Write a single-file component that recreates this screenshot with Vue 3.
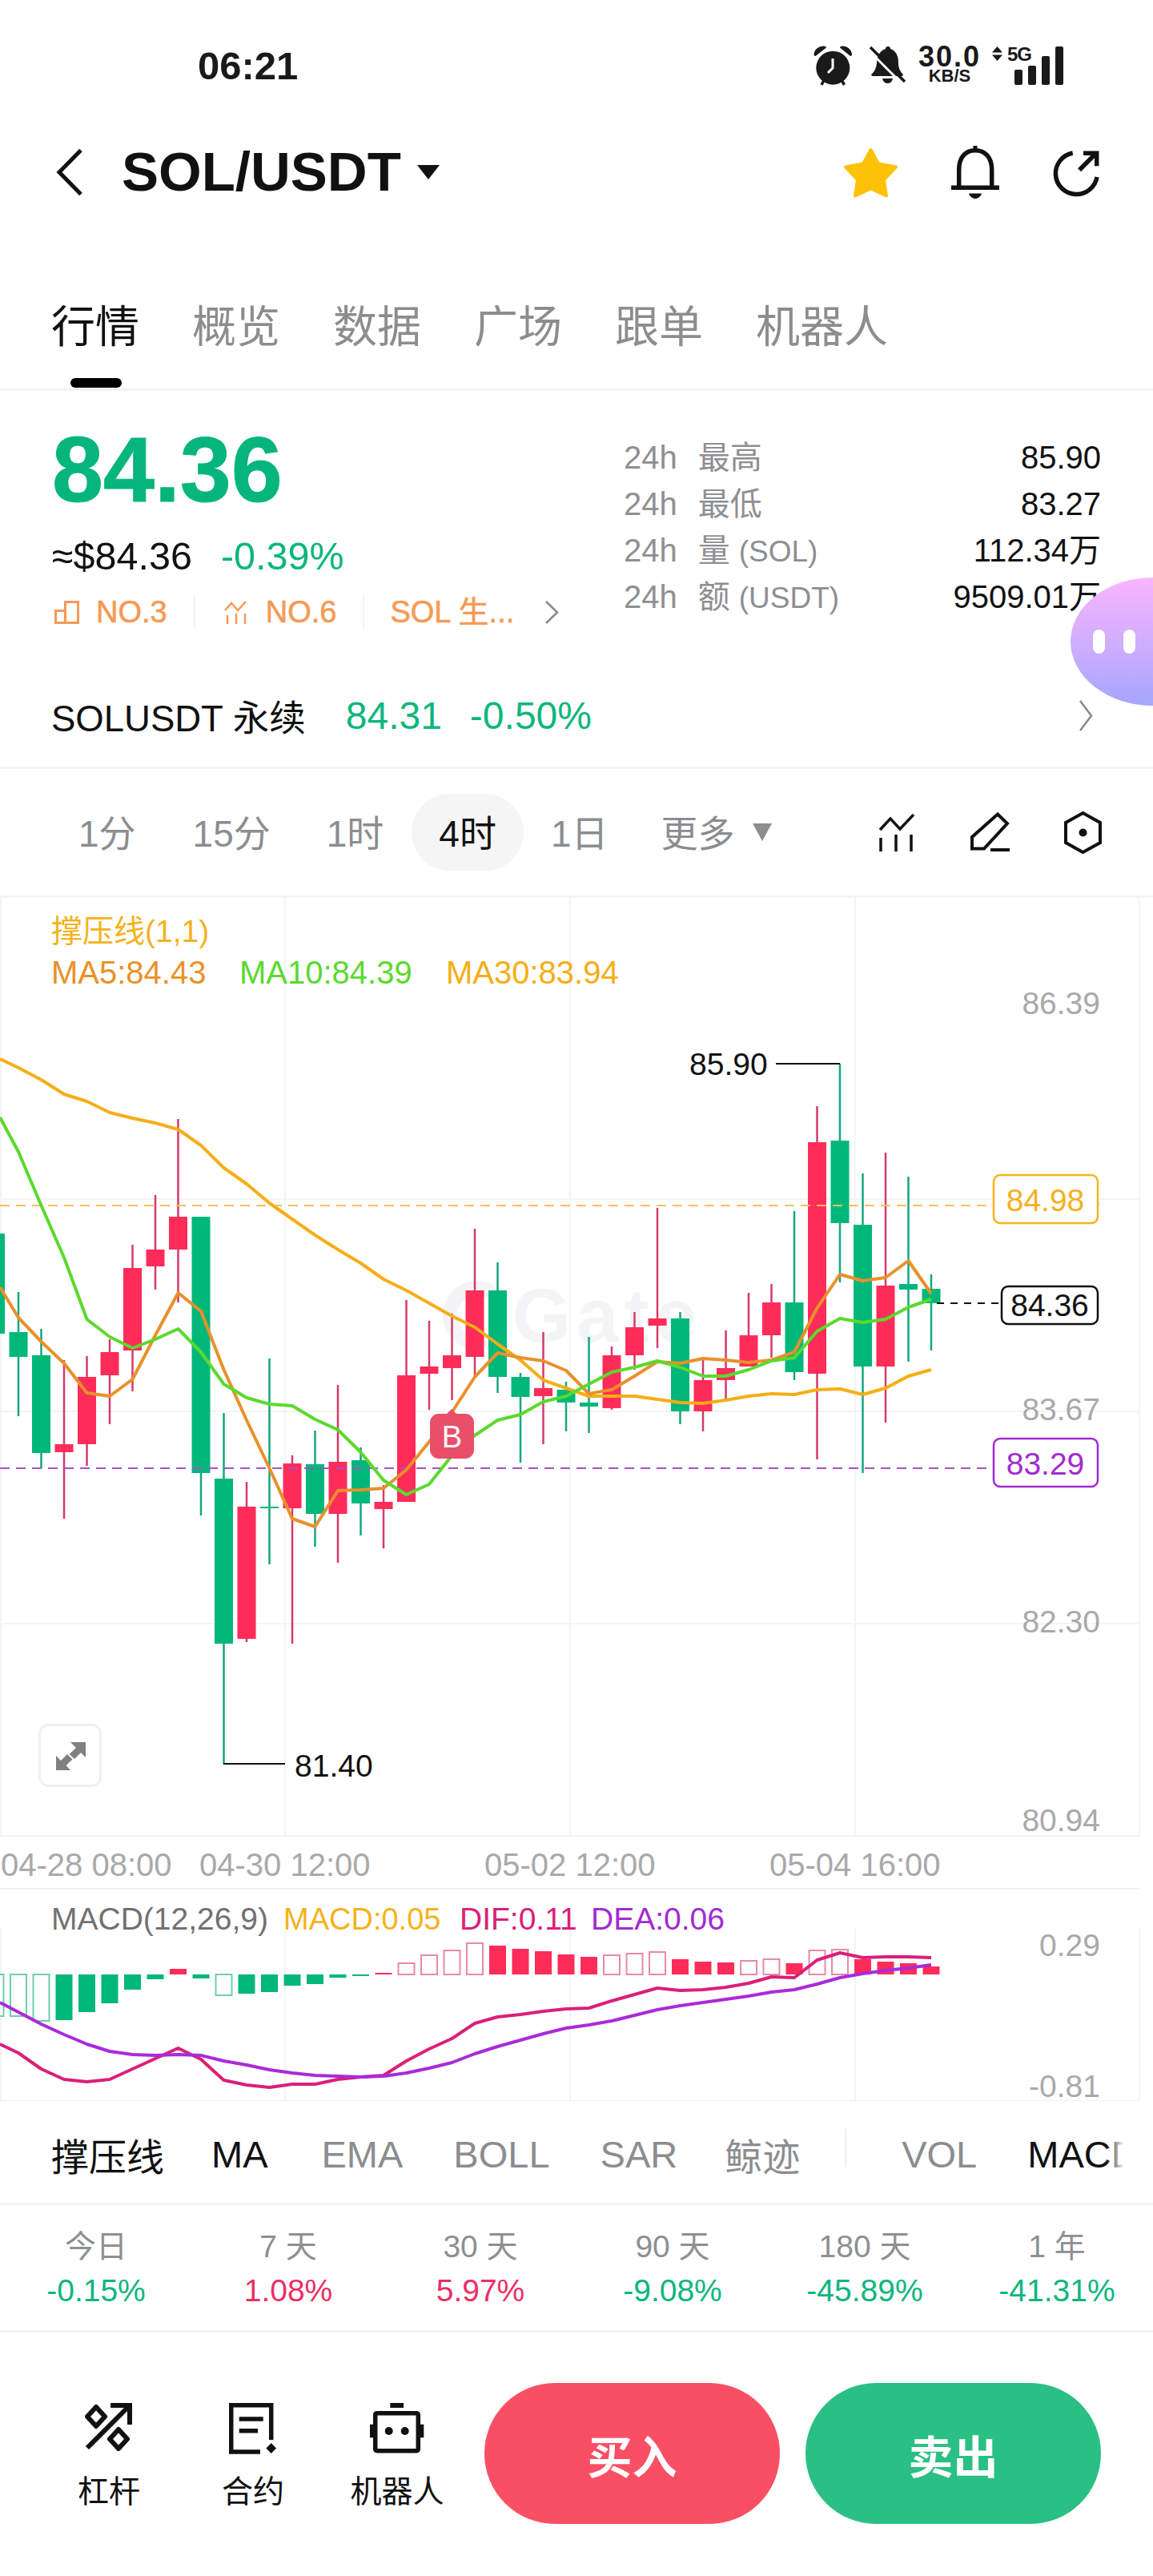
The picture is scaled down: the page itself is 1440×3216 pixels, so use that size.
<template>
  <div class="page">
    <div class="status">
      <span class="clock">06:21</span>
      <div class="status-right">
        <svg class="ic-alarm" width="49" height="50" viewBox="0 0 49 50">
          <circle cx="24.3" cy="27.7" r="21" fill="#1a1a1a" />
          <path d="M24 16v12l-6 6" fill="none" stroke="#fff" stroke-width="3" />
          <path d="M0.5 11C1 5 6 0.5 13 0.5c2 0 3 1 3 2L2.5 13c-1 0-2-1-2-2zM48 11C47.500 5 42.500 0.500 36 0.500c-2 0-3 1-3 2L46 13c1 0 2-1 2-2z" fill="#1a1a1a" />
          <path d="M13 43l-3 6M35 43l3.500 6" stroke="#1a1a1a" stroke-width="3.500" />
        </svg>
        <svg class="ic-mute" width="46" height="47" viewBox="0 0 46 47">
          <path d="M23 1a3 3 0 0 1 3 3c7 2 10 9 10 17 0 7 2 11 6 15l-1 2H3l-1-2c4-3 6-7 7-14 0-9 4-16 11-18a3 3 0 0 1 3-3z" fill="#1a1a1a" />
          <path d="M16 41h13c-1 4-3 6-6.500 6S17 45 16 41z" fill="#1a1a1a" />
          <path d="M-2 5L41 48" stroke="#fff" stroke-width="3" />
          <path d="M1 2l43 43" stroke="#1a1a1a" stroke-width="3.500" />
        </svg>
        <div class="speed">
          <span class="speed-num">30.0</span>
          <span class="speed-unit">KB/S</span>
        </div>
        <svg class="ic-updown" width="13" height="18" viewBox="0 0 13 18">
          <path d="M6.500 0L13 7.500H0zM0 10.500h13L6.500 18z" fill="#1a1a1a" />
        </svg>
        <div class="signal">
          <span class="net">5G</span>
          <i class="bar b1"></i>
          <i class="bar b2"></i>
          <i class="bar b3"></i>
          <i class="bar b4"></i>
        </div>
      </div>
    </div>

    <div class="nav">
      <svg width="33" height="58" viewBox="0 0 33 58">
        <path d="M31 1.500L4 29l27 27.500" fill="none" stroke="#111" stroke-width="5" />
      </svg>
      <span class="pair">SOL/USDT</span>
      <i class="pair-caret"></i>
      <div class="nav-actions">
        <svg width="68" height="63" viewBox="0 0 68 63">
          <path d="M33.500 3L43 20.500l22 4-15 16 3 20-19.500-9-19.500 9 3-20-15-16 22-4z" fill="#fdc107" stroke="#fdc107" stroke-width="4" stroke-linejoin="round" />
        </svg>
        <svg width="60" height="66" viewBox="0 0 60 66">
          <path d="M9.700 52V30C9.700 14 18 5.700 30 5.700S50.700 14 50.700 30v22" fill="none" stroke="#111" stroke-width="5.500" />
          <path d="M0 49.500h60v5.500H0zM27.500 0h5v6h-5zM22 59.500h16c-1 4-5 6.500-8 6.500s-7-2.500-8-6.500z" fill="#111" />
        </svg>
        <svg class="ic-share" width="59" height="58" viewBox="0 0 59 58">
          <path d="M25.700 3A26 26 0 1 0 56 33" fill="none" stroke="#111" stroke-width="5.500" />
          <path d="M34 24.300L54 4.300M39 3.300h16.700v16" fill="none" stroke="#111" stroke-width="5.500" />
        </svg>
      </div>
    </div>

    <div class="tabs">
      <span v-for="(t, i) in tabs" :key="t" class="tab" :class="{ active: i === 0 }">{{ t }}</span>
    </div>

    <div class="quote">
      <div class="quote-left">
        <div class="last">84.36</div>
        <div class="sub">
          <span>≈$84.36</span>
          <span class="up">-0.39%</span>
        </div>
        <div class="ranks">
          <span class="rank first">
            <svg width="31" height="29" viewBox="0 0 31 29">
              <path d="M1.500 27.500V12.500h12V1.500h16v26zM13.500 12.500v15" fill="none" stroke="#f59a55" stroke-width="3" />
            </svg>
            NO.3
          </span>
          <span class="rank">
            <svg width="31" height="29" viewBox="0 0 31 29">
              <path d="M1 12l8-9 8 9 10-11M4 18v11M15 16v13M26 16v13" fill="none" stroke="#f59a55" stroke-width="2.500" />
            </svg>
            NO.6
          </span>
          <span class="rank last-rank">SOL 生...</span>
          <svg class="chev" width="18" height="29" viewBox="0 0 18 29">
            <path d="M2 1l14 13.500L2 28" fill="none" stroke="#888" stroke-width="2.500" />
          </svg>
        </div>
      </div>
      <div class="quote-right">
        <div v-for="s in dayStats" :key="s.name" class="stat">
          <span class="stat-name"><em>24h</em>{{ s.name }}<small v-if="s.unit">{{ s.unit }}</small></span>
          <span class="stat-val">{{ s.val }}</span>
        </div>
      </div>
    </div>

    <div class="perp">
      <span class="perp-name">SOLUSDT 永续</span>
      <span class="perp-price">84.31</span>
      <span class="perp-pct">-0.50%</span>
      <svg class="perp-chev" width="18" height="39" viewBox="0 0 18 39">
        <path d="M2 1l14 18.500L2 38" fill="none" stroke="#888" stroke-width="2.500" />
      </svg>
    </div>

    <div class="periods">
      <span v-for="p in periods" :key="p" class="period" :class="{ active: p === '4时' }">{{ p }}</span>
      <span class="period more">更多<i class="more-caret"></i></span>
      <div class="tools">
        <svg width="46" height="47" viewBox="0 0 46 47">
          <path d="M2 20L15 6l12 13L44 1M3 30v17M22 26v21M41 26v21" fill="none" stroke="#111" stroke-width="3.500" />
        </svg>
        <svg width="50" height="50" viewBox="0 0 50 50">
          <path d="M35 2.500L47 14 18 45.500H3V31zM26 47h24" fill="none" stroke="#111" stroke-width="4" />
        </svg>
        <svg width="47" height="53" viewBox="0 0 47 53">
          <path d="M23.500 2L45 14v25L23.500 51 2 39V14z" fill="none" stroke="#111" stroke-width="4" />
          <circle cx="23.500" cy="26.500" r="5" fill="#111" />
        </svg>
      </div>
    </div>

    <svg class="chart" width="1440" height="1505" viewBox="0 1118 1440 1505">
      <path class="rule" d="M0 1119H1440" />
      <path class="grid" d="M1 1120V2292M356 1120V2292M712 1120V2292M1068 1120V2292M1423 1120V2292M1 2408V2623M356 2408V2623M712 2408V2623M1068 2408V2623M1423 2408V2623" />
      <path class="grid" d="M0 1497H1423M0 1762H1423M0 2027H1423" />
      <path class="rule-thin" d="M0 2292H1423M0 2358H1423M0 2623H1423" />

      <g class="watermark">
        <path d="M618 1616A34 34 0 1 0 618 1668" fill="none" stroke="#f3f4f5" stroke-width="18" />
        <text x="640" y="1675">Gate</text>
      </g>

      <text v-for="a in priceAxis" :key="a.t" class="axis" x="1374" :y="a.y">{{ a.t }}</text>
      <text v-for="a in timeAxis" :key="a.t" class="time" :x="a.x" y="2342">{{ a.t }}</text>

      <text class="legend c-yellow" x="64" y="1176">撑压线(1,1)</text>
      <text class="legend wide c-ma5" x="64" y="1228">MA5:84.43</text>
      <text class="legend wide c-ma10" x="299" y="1228">MA10:84.39</text>
      <text class="legend wide c-ma30" x="557" y="1228">MA30:83.94</text>

      <g v-for="c in candles" :key="c.x">
        <path :d="`M${c.x} ${c.high}V${c.low}`" :stroke="c.up ? '#d63a68' : '#14a680'" stroke-width="2.500" />
        <rect :x="c.x - 11.5" :y="c.top" width="23" :height="c.bot - c.top" :fill="c.up ? '#ff2c5a' : '#00b77a'" />
      </g>

      <path class="dash-y" d="M0 1505H1240" />
      <path class="dash-p" d="M0 1833H1240" />

      <polyline :points="ma30" class="ln" stroke="#f5ae15" />
      <polyline :points="ma5" class="ln" stroke="#e8912a" />
      <polyline :points="ma10" class="ln" stroke="#5bd92e" />

      <path d="M969 1328H1049" stroke="#111" stroke-width="2" />
      <text class="note" x="861" y="1342">85.90</text>
      <path d="M279 2202H356" stroke="#111" stroke-width="2" />
      <text class="note" x="368" y="2218">81.40</text>

      <path d="M548 1765H558L564 1759 570 1765H581A11 11 0 0 1 592 1776V1810A11 11 0 0 1 581 1821H548A11 11 0 0 1 537 1810V1776A11 11 0 0 1 548 1765Z" fill="#ea4f69" />
      <text class="mark" x="564.500" y="1807">B</text>

      <path d="M1170 1627H1248" stroke="#111" stroke-width="2" stroke-dasharray="9 8" />
      <rect class="tag" x="1241" y="1467" width="130" height="60" rx="8" stroke="#f5b51d" />
      <text class="tag-t" x="1305.500" y="1512" fill="#f5b01d">84.98</text>
      <rect class="tag" x="1251" y="1606" width="120" height="47" rx="8" stroke="#111" />
      <text class="tag-t" x="1311" y="1643" fill="#111">84.36</text>
      <rect class="tag" x="1241" y="1796" width="130" height="60" rx="8" stroke="#a32ad1" />
      <text class="tag-t" x="1305.500" y="1841" fill="#a32ad1">83.29</text>

      <rect class="expand" x="49.500" y="2153.500" width="76" height="76" rx="11" />
      <path d="M88 2175H107V2194L101 2188 93 2196 86.500 2190 95 2182zM70 2192L76 2198 84 2190 90.500 2196.500 82.500 2204 88 2210H70z" fill="#808080" />

      <text class="legend c-grey" x="64" y="2409">MACD(12,26,9)</text>
      <text class="legend narrow c-yellow" x="354" y="2409">MACD:0.05</text>
      <text class="legend c-dif" x="574" y="2409">DIF:0.11</text>
      <text class="legend c-dea" x="738" y="2409">DEA:0.06</text>
      <text class="axis" x="1374" y="2442">0.29</text>
      <text class="axis" x="1374" y="2618">-0.81</text>

      <rect
        v-for="b in macdBars"
        :key="b.x"
        :x="b.hollow ? b.x - 10 : b.x - 10.5"
        :y="b.y"
        :width="b.hollow ? 20 : 21"
        :height="b.h"
        :fill="b.hollow ? '#fff' : b.color"
        :stroke="b.hollow ? b.soft : 'none'"
        stroke-width="2"
      />
      <polyline :points="dif" class="ln" stroke="#da2079" />
      <polyline :points="dea" class="ln" stroke="#a92bd8" />
    </svg>

    <div class="indicators">
      <div class="ind-scroll">
        <span v-for="n in indicators" :key="n.t" class="ind" :class="{ on: n.on, sep: n.sep }">{{ n.t }}</span>
      </div>
    </div>

    <div class="returns">
      <div v-for="r in returns" :key="r.t" class="ret">
        <span class="ret-t">{{ r.t }}</span>
        <span class="ret-v" :class="r.v.startsWith('-') ? 'up' : 'down'">{{ r.v }}</span>
      </div>
    </div>

    <div class="actions">
      <div class="tool-btn">
        <svg width="60" height="64" viewBox="0 0 60 64">
          <path d="M3 56L55 4M32 3h24v24" fill="none" stroke="#111" stroke-width="6" />
          <path d="M14 5l11 12-11 12L3 17zM42 33l11 12-11 12-11-12z" fill="none" stroke="#111" stroke-width="6" stroke-linejoin="round" />
        </svg>
        <span>杠杆</span>
      </div>
      <div class="tool-btn">
        <svg width="60" height="64" viewBox="0 0 60 64">
          <path d="M52.700 46V2.700H2.700V61H39M12.700 20h30M12.700 34.700H36" fill="none" stroke="#111" stroke-width="5.500" />
          <path d="M52.700 50L59 56.500 52.700 63 46.400 56.500z" fill="#111" />
        </svg>
        <span>合约</span>
      </div>
      <div class="tool-btn">
        <svg width="68" height="64" viewBox="0 0 68 64">
          <rect x="6.700" y="12.700" width="53.600" height="47" rx="2" fill="none" stroke="#111" stroke-width="5.500" />
          <path d="M25.300 0H42V6H25.300zM0 26.700H6.300V43.300H0zM61.700 26.700H67.300V43.300H61.700z" fill="#111" />
          <circle cx="23.700" cy="35" r="5" fill="#111" />
          <circle cx="43.700" cy="35" r="5" fill="#111" />
        </svg>
        <span>机器人</span>
      </div>
      <button class="trade buy">买入</button>
      <button class="trade sell">卖出</button>
    </div>

    <div class="float-ball">
      <i></i>
      <i></i>
    </div>
  </div>
</template>

<script setup>
const tabs = ['行情', '概览', '数据', '广场', '跟单', '机器人']
const periods = ['1分', '15分', '1时', '4时', '1日']

const dayStats = [
  { name: '最高', val: '85.90' },
  { name: '最低', val: '83.27' },
  { name: '量', unit: '(SOL)', val: '112.34万' },
  { name: '额', unit: '(USDT)', val: '9509.01万' },
]

const indicators = [
  { t: '撑压线', on: true },
  { t: 'MA', on: true },
  { t: 'EMA' },
  { t: 'BOLL' },
  { t: 'SAR' },
  { t: '鲸迹', sep: true },
  { t: 'VOL' },
  { t: 'MACD', on: true },
]

const returns = [
  { t: '今日', v: '-0.15%' },
  { t: '7 天', v: '1.08%' },
  { t: '30 天', v: '5.97%' },
  { t: '90 天', v: '-9.08%' },
  { t: '180 天', v: '-45.89%' },
  { t: '1 年', v: '-41.31%' },
]

const priceAxis = [
  { t: '86.39', y: 1266 },
  { t: '84.98', y: 1511 },
  { t: '83.67', y: 1773 },
  { t: '82.30', y: 2038 },
  { t: '80.94', y: 2286 },
]

const timeAxis = [
  { t: '04-28 08:00', x: 1 },
  { t: '04-30 12:00', x: 249 },
  { t: '05-02 12:00', x: 605 },
  { t: '05-04 16:00', x: 961 },
]

const xOf = (i) => 23 + 28.5 * (i - 1)

// up, high, top, bottom, low (red = up)
const raw = [
  [0, 1540, 1540, 1665, 1691],
  [0, 1613, 1663, 1694, 1768],
  [0, 1659, 1692, 1814, 1833],
  [1, 1698, 1803, 1813, 1896],
  [1, 1693, 1719, 1803, 1830],
  [1, 1672, 1688, 1717, 1778],
  [1, 1554, 1583, 1686, 1737],
  [1, 1492, 1560, 1581, 1610],
  [1, 1397, 1519, 1560, 1626],
  [0, 1519, 1519, 1839, 1892],
  [0, 1764, 1846, 2052, 2202],
  [1, 1850, 1881, 2046, 2050],
  [0, 1696, 1881, 1883, 1953],
  [1, 1817, 1827, 1883, 2052],
  [0, 1786, 1828, 1890, 1931],
  [1, 1729, 1825, 1890, 1951],
  [0, 1807, 1823, 1877, 1917],
  [1, 1854, 1875, 1884, 1933],
  [1, 1623, 1717, 1875, 1875],
  [1, 1649, 1706, 1715, 1760],
  [1, 1640, 1692, 1708, 1748],
  [1, 1534, 1611, 1694, 1718],
  [0, 1576, 1611, 1719, 1739],
  [0, 1714, 1719, 1744, 1826],
  [1, 1663, 1733, 1743, 1803],
  [0, 1725, 1735, 1751, 1787],
  [0, 1669, 1751, 1756, 1789],
  [1, 1681, 1692, 1758, 1760],
  [1, 1638, 1657, 1692, 1710],
  [1, 1508, 1646, 1655, 1683],
  [0, 1638, 1646, 1762, 1778],
  [1, 1695, 1723, 1762, 1787],
  [1, 1661, 1708, 1723, 1747],
  [1, 1614, 1667, 1706, 1706],
  [1, 1603, 1626, 1667, 1695],
  [0, 1512, 1626, 1713, 1723],
  [1, 1381, 1426, 1715, 1822],
  [0, 1328, 1424, 1527, 1601],
  [0, 1465, 1529, 1706, 1839],
  [1, 1439, 1605, 1706, 1776],
  [0, 1469, 1603, 1610, 1700],
  [0, 1591, 1609, 1627, 1686],
]

const candles = raw.map((c, i) => ({
  x: xOf(i),
  up: c[0] === 1,
  high: c[1],
  top: c[2],
  bot: c[3],
  low: c[4],
}))

const line = (start, ys) => `0,${start} ` + ys.map((y, i) => `${xOf(i + 1)},${y}`).join(' ')

const ma30 = line(1322, [
  1333, 1348, 1366, 1375, 1389, 1396, 1402, 1410, 1430, 1458, 1478, 1502, 1522, 1542, 1560, 1577,
  1597, 1611, 1627, 1643, 1657, 1678, 1698, 1723, 1733, 1743, 1743, 1743, 1747, 1751, 1752, 1748,
  1743, 1740, 1741, 1735, 1734, 1741, 1733, 1718, 1710,
])
const ma10 = line(1395, [
  1438, 1505, 1570, 1647, 1669, 1683, 1672, 1659, 1688, 1728, 1745, 1753, 1755, 1772, 1785, 1813,
  1848, 1866, 1853, 1817, 1792, 1773, 1766, 1750, 1743, 1728, 1713, 1707, 1699, 1707, 1718, 1718,
  1710, 1699, 1695, 1662, 1646, 1651, 1647, 1632, 1622,
])
const ma5 = line(1607, [
  1645, 1675, 1702, 1739, 1743, 1722, 1667, 1614, 1637, 1710, 1773, 1833, 1896, 1906, 1861, 1860,
  1858, 1835, 1800, 1763, 1719, 1689, 1695, 1699, 1711, 1740, 1735, 1718, 1700, 1702, 1696, 1698,
  1701, 1698, 1688, 1633, 1591, 1599, 1595, 1574, 1615,
])
const dif = line(2552, [
  2563, 2583, 2596, 2599, 2596, 2583, 2570, 2557, 2571, 2597, 2603, 2606, 2602, 2602, 2596, 2593,
  2591, 2573, 2558, 2545, 2526, 2518, 2515, 2511, 2508, 2507, 2498, 2490, 2482, 2485, 2484, 2481,
  2476, 2468, 2469, 2447, 2438, 2444, 2443, 2443, 2444,
])
const dea = line(2500, [
  2512, 2527, 2540, 2552, 2561, 2565, 2566, 2565, 2566, 2573, 2578, 2584, 2588, 2591, 2592, 2593,
  2592, 2588, 2582, 2575, 2564, 2555, 2547, 2539, 2532, 2528, 2523, 2516, 2509, 2504, 2500, 2496,
  2492, 2487, 2484, 2477, 2469, 2464, 2460, 2457, 2453,
])

// histogram tip y, negative value means hollow bar
const BASE = 2465
const histogram = [
  -2517, -2517, -2523, 2522, 2512, 2501, 2484, 2471, 2458, 2470, -2491, 2489, 2487, 2479, 2477, 2469,
  2467, 2463, -2451, -2441, -2435, -2426, 2429, 2433, 2436, 2440, 2443, -2441, -2439, -2437, 2446,
  2449, 2450, -2448, -2446, 2451, -2435, -2434, 2446, 2449, 2451, 2455,
]
const macdBars = histogram.map((v, i) => {
  const tip = Math.abs(v)
  const isUp = tip < BASE
  return {
    x: xOf(i),
    y: Math.min(tip, BASE),
    h: Math.abs(tip - BASE),
    hollow: v < 0,
    color: isUp ? '#ff2c5a' : '#00b77a',
    soft: isUp ? '#e88aa6' : '#6fcdb0',
  }
})
</script>

<style>
html,
body {
  margin: 0;
  background: #fff;
}
</style>

<style scoped>
.page {
  position: relative;
  width: 1440px;
  height: 3216px;
  overflow: hidden;
  background: #fff;
  color: #111;
  font-family: "Liberation Sans", "Noto Sans CJK SC", sans-serif;
}

.status {
  display: flex;
  height: 140px;
  box-sizing: border-box;
  padding: 57px 112px 0 247px;
}
.clock {
  font-size: 49px;
  line-height: 50px;
  font-weight: 700;
  color: #1a1a1a;
}
.status-right {
  display: flex;
  align-items: flex-start;
  margin-left: auto;
}
.ic-mute {
  margin-left: 21px;
}
.speed {
  display: flex;
  flex-direction: column;
  align-items: center;
  width: 78px;
  margin-left: 15px;
  font-weight: 700;
  color: #1a1a1a;
}
.speed-num {
  font-size: 36px;
  line-height: 28px;
  letter-spacing: 2px;
}
.speed-unit {
  font-size: 22px;
  line-height: 20px;
}
.ic-updown {
  margin: 1px 0 0 14px;
}
.signal {
  position: relative;
  display: flex;
  align-items: flex-end;
  gap: 7px;
  height: 49px;
  margin-left: 15px;
}
.net {
  position: absolute;
  top: 0;
  left: -9px;
  font-size: 24px;
  line-height: 21px;
  font-weight: 700;
  letter-spacing: -1px;
  color: #1a1a1a;
}
.bar {
  width: 10px;
  border-radius: 2px;
  background: #1a1a1a;
}
.b1 {
  height: 19px;
}
.b2 {
  height: 24px;
}
.b3 {
  height: 36px;
}
.b4 {
  height: 48px;
}

.nav {
  display: flex;
  align-items: center;
  height: 150px;
  padding-left: 70px;
}
.pair {
  margin-left: 49px;
  font-size: 69px;
  font-weight: 700;
  line-height: 80px;
}
.pair-caret {
  width: 0;
  height: 0;
  margin-left: 20px;
  border-left: 14px solid transparent;
  border-right: 14px solid transparent;
  border-top: 18px solid #111;
}
.nav-actions {
  display: flex;
  align-items: center;
  gap: 66px;
  margin-left: auto;
  padding-right: 67px;
}
.ic-share {
  margin-top: 4px;
}

.tabs {
  display: flex;
  gap: 66px;
  height: 198px;
  box-sizing: border-box;
  padding: 88px 0 0 64px;
  border-bottom: 3px solid #f3f3f3;
}
.tab {
  position: relative;
  height: 60px;
  font-size: 55px;
  line-height: 60px;
  color: #8b8d8f;
}
.tab.active {
  color: #111;
}
.tab.active::after {
  content: "";
  position: absolute;
  left: 24px;
  top: 94px;
  width: 64px;
  height: 12px;
  border-radius: 6px;
  background: #000;
}

.quote {
  display: flex;
  justify-content: space-between;
  height: 341px;
  box-sizing: border-box;
  padding: 0 65px;
}
.last {
  margin-top: 42px;
  font-size: 115px;
  line-height: 112px;
  font-weight: 700;
  color: #06b57b;
  -webkit-text-stroke: 1px #06b57b;
}
.sub {
  display: flex;
  gap: 36px;
  margin-top: 24px;
  font-size: 48.5px;
  line-height: 56px;
}
.up {
  color: #0cb67e;
}
.down {
  color: #ec2f64;
}
.ranks {
  display: flex;
  align-items: center;
  margin-top: 20px;
  padding-left: 3px;
  font-size: 38px;
  line-height: 44px;
  color: #f59a55;
  -webkit-text-stroke: 0.6px #f59a55;
}
.rank {
  display: flex;
  align-items: center;
  gap: 21px;
  margin-left: 36px;
  padding-right: 33px;
  border-right: 2px solid #f3f3f3;
}
.rank.first {
  margin-left: 0;
}
.rank.last-rank {
  margin-left: 32px;
  padding-right: 0;
  border-right: 0;
}
.chev {
  margin-left: 38px;
}
.quote-right {
  width: 596px;
  padding-top: 54px;
}
.stat {
  display: flex;
  justify-content: space-between;
  height: 58px;
  font-size: 40px;
  line-height: 58px;
}
.stat-name {
  color: #8e8f91;
}
.stat-name em {
  margin-right: 26px;
  font-style: normal;
}
.stat-name small {
  margin-left: 11px;
  font-size: 37px;
}

.perp {
  display: flex;
  align-items: center;
  height: 131px;
  box-sizing: border-box;
  padding: 0 75px 0 64px;
  border-bottom: 3px solid #f3f3f3;
}
.perp-name {
  font-size: 45.500px;
}
.perp-price {
  margin-left: 50px;
  font-size: 48px;
  color: #0cb67e;
}
.perp-pct {
  margin-left: 35px;
  font-size: 48px;
  color: #0cb67e;
}
.perp-chev {
  margin-left: auto;
}

.periods {
  display: flex;
  align-items: center;
  height: 158px;
  box-sizing: border-box;
  padding: 0 64px 0 63px;
}
.period {
  display: flex;
  align-items: center;
  height: 96px;
  box-sizing: border-box;
  padding: 0 34px 4px;
  border-radius: 48px;
  font-size: 46px;
  color: #8b8d8f;
}
.period:first-child {
  padding-left: 35px;
  padding-right: 36px;
}
.period:nth-child(2),
.period:nth-child(3) {
  padding-left: 35px;
  padding-right: 35px;
}
.period.active {
  background: #f5f5f5;
  color: #111;
}
.more {
  margin-left: -2px;
}
.more-caret {
  width: 0;
  height: 0;
  margin: 4px 0 0 22px;
  border-left: 12px solid transparent;
  border-right: 12px solid transparent;
  border-top: 22px solid #8b8d8f;
}
.tools {
  display: flex;
  align-items: center;
  gap: 68px;
  margin-left: auto;
}

.chart {
  display: block;
}
.rule {
  stroke: #f3f3f3;
  stroke-width: 3;
}
.rule-thin {
  stroke: #f1f1f1;
  stroke-width: 2;
}
.grid {
  stroke: #f4f4f5;
  stroke-width: 2;
  fill: none;
}
.watermark text {
  font-size: 94px;
  font-weight: 700;
  letter-spacing: 7px;
  fill: #f3f4f5;
}
.axis {
  font-size: 39px;
  fill: #a8a9ab;
  text-anchor: end;
}
.time {
  font-size: 40px;
  fill: #a8a9ab;
}
.legend {
  font-size: 39px;
}
.legend.wide {
  font-size: 40px;
}
.legend.narrow {
  font-size: 38px;
}
.c-yellow {
  fill: #f5b21b;
}
.c-ma5 {
  fill: #e8912a;
}
.c-ma10 {
  fill: #5bd92e;
}
.c-ma30 {
  fill: #f5ae15;
}
.c-grey {
  fill: #717171;
}
.c-dif {
  fill: #da2079;
}
.c-dea {
  fill: #a32ad1;
}
.ln {
  fill: none;
  stroke-width: 4;
  stroke-linejoin: round;
}
.dash-y {
  stroke: #f6c355;
  stroke-width: 2;
  stroke-dasharray: 12 8;
}
.dash-p {
  stroke: #a54fd0;
  stroke-width: 2;
  stroke-dasharray: 12 8;
}
.note {
  font-size: 39px;
  fill: #111;
}
.mark {
  font-size: 38px;
  fill: #fff;
  text-anchor: middle;
}
.tag {
  fill: #fff;
  stroke-width: 2.5;
}
.tag-t {
  font-size: 39px;
  text-anchor: middle;
}
.expand {
  fill: #fff;
  stroke: #f0f0f0;
  stroke-width: 3;
}

.indicators {
  height: 130px;
  box-sizing: border-box;
  padding: 6px 31px 0 64px;
  border-bottom: 3px solid #f3f3f3;
}
.ind-scroll {
  position: relative;
  display: flex;
  align-items: center;
  gap: 63px;
  height: 100%;
  overflow: hidden;
  white-space: nowrap;
}
.ind-scroll::after {
  content: "";
  position: absolute;
  top: 0;
  right: 0;
  width: 28px;
  height: 100%;
  background: linear-gradient(to right, rgba(255, 255, 255, 0), #fff 80%);
}
.ind {
  flex-shrink: 0;
  font-size: 47px;
  color: #8b8d8f;
}
.ind.on {
  color: #111;
}
.ind:nth-child(2) {
  margin: 0 4px 0 -4px;
}
.ind.sep {
  position: relative;
  margin: 0 64px 0 -4px;
}
.ind.sep::after {
  content: "";
  position: absolute;
  top: 2px;
  right: -58px;
  width: 2px;
  height: 48px;
  background: #f0f0f0;
}

.returns {
  display: grid;
  grid-template-columns: repeat(6, 240px);
  height: 159px;
  box-sizing: border-box;
  padding-top: 27px;
  border-bottom: 3px solid #f3f3f3;
}
.ret {
  display: flex;
  flex-direction: column;
  align-items: center;
  gap: 5px;
}
.ret-t {
  font-size: 39px;
  line-height: 50px;
  color: #8e8f91;
}
.ret-v {
  font-size: 39px;
  line-height: 50px;
}

.actions {
  display: flex;
  align-items: flex-start;
  padding: 63px 0 0 46px;
}
.tool-btn {
  display: flex;
  flex-direction: column;
  align-items: center;
  width: 180px;
  padding-top: 25px;
  font-size: 39px;
  line-height: 50px;
}
.tool-btn span {
  margin-top: 22px;
}
.trade {
  width: 369px;
  height: 176px;
  border: 0;
  border-radius: 88px;
  font-family: inherit;
  font-size: 56px;
  font-weight: 700;
  color: #fff;
}
.buy {
  margin-left: 19px;
  background: #f94f64;
}
.sell {
  margin-left: 32px;
  background: #2bc083;
}

.float-ball {
  position: absolute;
  top: 721px;
  right: 0;
  display: flex;
  gap: 23px;
  align-items: center;
  width: 103px;
  height: 160px;
  box-sizing: border-box;
  padding-left: 28px;
  border-radius: 103px 0 0 103px / 80px 0 0 80px;
  background: linear-gradient(to bottom, #f9b5fe, #a6a6fe);
}
.float-ball i {
  width: 15px;
  height: 30px;
  border-radius: 8px;
  background: #fff;
}
</style>
